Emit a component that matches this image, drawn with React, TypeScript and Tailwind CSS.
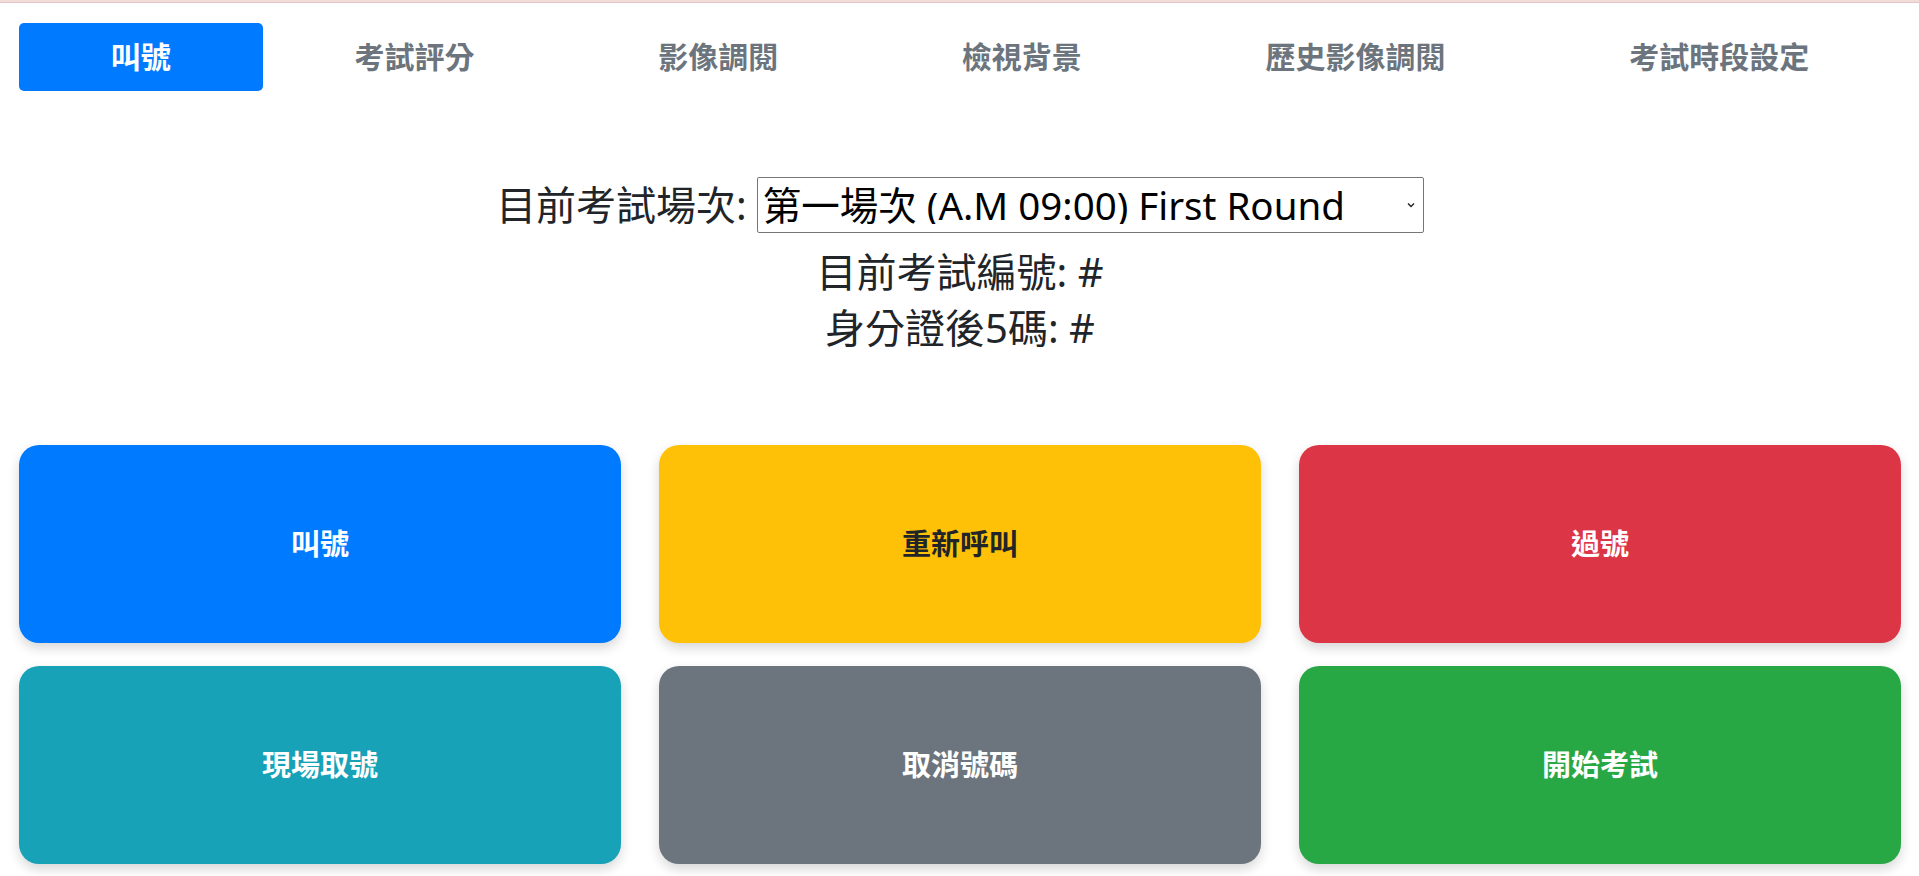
import { useState } from "react";

const tabs = ["叫號", "考試評分", "影像調閱", "檢視背景", "歷史影像調閱", "考試時段設定"];

const actions = [
  { label: "叫號", cls: "bg-[#007bff] text-white" },
  { label: "重新呼叫", cls: "bg-[#ffc107] text-[#212529]" },
  { label: "過號", cls: "bg-[#dc3545] text-white" },
  { label: "現場取號", cls: "bg-[#17a2b8] text-white" },
  { label: "取消號碼", cls: "bg-[#6c757d] text-white" },
  { label: "開始考試", cls: "bg-[#28a745] text-white" },
];

const cjk = "font-['Noto_Sans','Noto_Sans_CJK_TC',sans-serif]";

export default function App() {
  const [active, setActive] = useState(0);
  const [round, setRound] = useState("1");

  return (
    <div className={`min-h-[876px] bg-white text-[#212529] ${cjk}`}>
      <div className="h-[3px] bg-[#f1dcd8] border-b border-[#e2c6c1]" />

      <div className="px-[19px] pr-[18px] pt-[20px]">
        {/* nav pills, fill */}
        <nav className="flex">
          {tabs.map((t, i) => (
            <button
              key={t}
              onClick={() => setActive(i)}
              className={`flex-auto h-[68px] px-4 rounded-[5px] text-[30px] font-bold leading-none ${
                i === active ? "bg-[#007bff] text-white" : "text-[#6c757d]"
              }`}
            >
              {t}
            </button>
          ))}
        </nav>

        <div className="mt-[86px] text-center text-[40px] leading-[56px]">
          <div className="flex items-center justify-center h-[56px] mb-[11px]">
            <span>目前考試場次:</span>
            <div className="relative ml-[10px]">
              <select
                value={round}
                onChange={(e) => setRound(e.target.value)}
                className="appearance-none w-[667px] h-[56px] border border-[#767676] rounded-[2px] bg-white pl-[5px] pr-8 text-black text-[38.5px] leading-none"
              >
                <option value="1">第一場次 (A.M 09:00) First Round</option>
                <option value="2">第二場次 (P.M 13:30) Second Round</option>
              </select>
              <svg
                className="absolute right-[8px] top-1/2 -translate-y-1/2 pointer-events-none"
                width="10"
                height="10"
                viewBox="0 0 10 10"
                fill="none"
                stroke="#222"
                strokeWidth="1.4"
              >
                <path d="M2 3.5 5 6.5 8 3.5" />
              </svg>
            </div>
          </div>
          <div>目前考試編號: #</div>
          <div>身分證後5碼: #</div>
        </div>

        <div className="mt-[89px] grid grid-cols-3 gap-x-[38px] gap-y-[23px]">
          {actions.map((a) => (
            <button
              key={a.label}
              className={`h-[198px] rounded-[20px] text-[29px] font-bold shadow-[0_5px_12px_rgba(0,0,0,0.16)] ${a.cls}`}
            >
              {a.label}
            </button>
          ))}
        </div>
      </div>
    </div>
  );
}
